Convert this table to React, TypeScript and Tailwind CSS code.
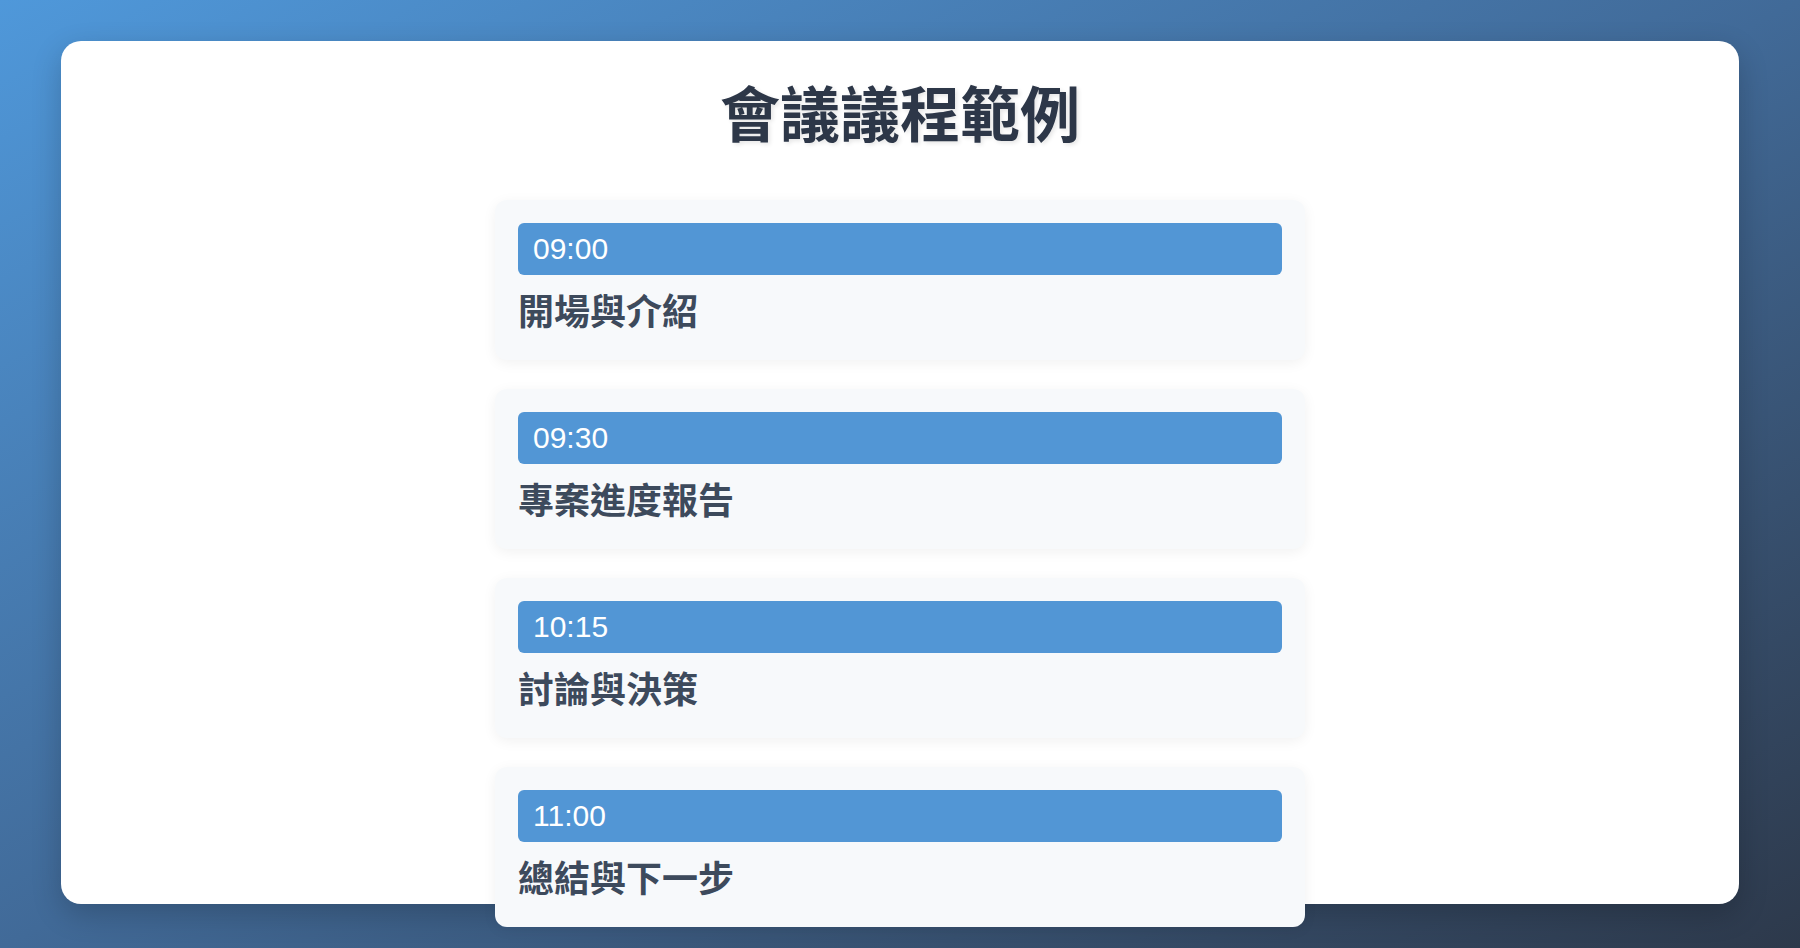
import React from 'react'

const agenda = [
  { time: '09:00', title: '開場與介紹' },
  { time: '09:30', title: '專案進度報告' },
  { time: '10:15', title: '討論與決策' },
  { time: '11:00', title: '總結與下一步' },
]

function AgendaItem({ time, title }: { time: string; title: string }) {
  return (
    <div className="w-[810px] rounded-xl bg-[#f7f9fb] px-[23px] pt-[23px] pb-[29px] shadow-[0_3px_14px_rgba(0,0,0,0.06)]">
      <div className="h-[52px] rounded-md bg-[#5296d5] pl-[15px] font-['Liberation_Sans',Arial,sans-serif] text-[30px] leading-[52px] text-white">{time}</div>
      <div className="mt-[13px] text-[36px] leading-[43px] font-bold text-[#3d4a5c]">{title}</div>
    </div>
  )
}

export default function App() {
  return (
    <div className="min-h-screen bg-gradient-to-br from-[#4f98da] via-[#416a98] to-[#2d394b] px-[61px] pt-[41px] pb-[44px] font-['Noto_Sans_CJK_TC','Noto_Sans',sans-serif]">
      <div className="h-[863px] rounded-[20px] bg-white pt-[34px] shadow-[0_10px_30px_rgba(0,0,0,0.2)]">
        {/* Heading */}
        <h1 className="mb-[53px] text-center text-[60px] leading-[72px] font-bold text-[#2d3748] [text-shadow:2px_2px_4px_rgba(0,0,0,0.1)]">會議議程範例</h1>

        {/* Agenda list */}
        <div className="flex flex-col items-center gap-[29px]">
          {agenda.map((item) => (
            <AgendaItem key={item.time} time={item.time} title={item.title} />
          ))}
        </div>
      </div>
    </div>
  )
}
